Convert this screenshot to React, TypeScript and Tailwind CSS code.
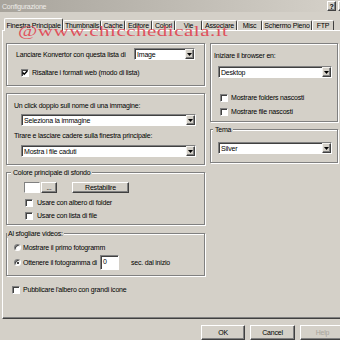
import React from "react";

function Check({ checked }: { checked?: boolean }) {
  return (
    <span className="w-[8px] h-[8px] shrink-0 bg-white border border-t-[#808080] border-l-[#808080] border-r-white border-b-white shadow-[inset_1px_1px_#404040] flex items-center justify-center">
      {checked && (
        <svg width="6" height="6" viewBox="0 0 6 6">
          <path d="M0.6 2.6 L2.2 4.3 L5.3 1" fill="none" stroke="#000" strokeWidth="1.4" />
        </svg>
      )}
    </span>
  );
}

function Radio({ checked }: { checked?: boolean }) {
  return (
    <span className="w-[7px] h-[7px] shrink-0 rounded-full bg-white border border-t-[#808080] border-l-[#808080] border-r-white border-b-white shadow-[inset_1px_1px_#404040] flex items-center justify-center">
      {checked && <span className="w-[2px] h-[2px] rounded-full bg-black" />}
    </span>
  );
}

function Select({ value, className }: { value: string; className: string }) {
  return (
    <div className={`h-[12px] bg-white flex items-center border border-t-[#808080] border-l-[#808080] border-r-white border-b-white shadow-[inset_1px_1px_#404040] ${className}`}>
      <span className="pl-[2px] flex-1 whitespace-nowrap">{value}</span>
      <span className="w-[9px] h-[10px] bg-[#d4d0c8] border border-t-[#f4f2ee] border-l-[#f4f2ee] border-r-[#404040] border-b-[#404040] shadow-[inset_-1px_-1px_#808080] flex items-center justify-center">
        <svg width="5" height="3" viewBox="0 0 5 3">
          <path d="M0 0H5L2.5 3Z" fill="#000" />
        </svg>
      </span>
    </div>
  );
}

const raised =
  "bg-[#d4d0c8] border border-t-white border-l-white border-r-[#404040] border-b-[#404040] shadow-[inset_-1px_-1px_#808080]";
const group = "border border-[#808080] shadow-[inset_1px_1px_#ffffff,1px_1px_#ffffff]";

const tabs: { label: string; w: string }[] = [
  { label: "Thumbnails", w: "w-[38px]" },
  { label: "Cache", w: "w-[24px]" },
  { label: "Editore", w: "w-[27px]" },
  { label: "Colori", w: "w-[23px]" },
  { label: "Vie", w: "w-[27px]" },
  { label: "Associare", w: "w-[35px]" },
  { label: "Misc", w: "w-[25px]" },
  { label: "Schermo Pieno", w: "w-[50px]" },
  { label: "FTP", w: "w-[22px]" },
];

export default function App() {
  return (
    <div className="w-[340px] h-[340px] overflow-hidden bg-[#d4d0c8] relative text-[7px] leading-[9px] tracking-[-0.2px] whitespace-nowrap text-black font-['Liberation_Sans',Arial,sans-serif]">
      <div className="w-[350px] flex flex-col">
        {/* title bar */}
        <div className="h-[12px] bg-linear-to-r from-[#a8a49c] to-[#d6d2ca] flex items-center justify-between pl-[2px] pr-[3px]">
          <span className="text-[#efede9]">Configurazione</span>
          <div className="flex gap-[2px]">
            <span className={`w-[9px] h-[10px] flex items-center justify-center font-bold ${raised}`}>?</span>
            <span className={`w-[9px] h-[10px] flex items-center justify-center ${raised}`}>
              <svg width="5" height="5" viewBox="0 0 5 5">
                <path d="M0 0L5 5M5 0L0 5" stroke="#000" strokeWidth="1.2" />
              </svg>
            </span>
          </div>
        </div>

        {/* tabs */}
        <div className="h-[18px] flex items-end pl-[4px] relative z-10">
          <div className="w-[59px] h-[13px] -mb-[1px] bg-[#d4d0c8] border-t border-l border-white border-r border-r-[#404040] rounded-t-[2px] flex items-start justify-center pt-[2px]">
            Finestra Principale
          </div>
          {tabs.map((t) => (
            <div
              key={t.label}
              className={`${t.w} h-[10px] bg-[#d4d0c8] border-t border-l border-white border-r border-r-[#404040] rounded-t-[2px] flex items-center justify-center`}
            >
              {t.label}
            </div>
          ))}
        </div>

        {/* panel */}
        <div className="ml-[2px] w-[344px] h-[289px] border border-t-white border-l-white border-r-[#404040] border-b-[#404040] shadow-[inset_-1px_-1px_#808080] flex gap-[5px] pl-[3px] pt-[12px]">
          {/* left column */}
          <div className="w-[199px] flex flex-col">
            <div className={`h-[43px] ${group} pt-[4px] pl-[9px] pr-[9px] flex flex-col`}>
              <div className="flex items-center h-[12px]">
                <span>Lanciare Konvertor con questa lista di</span>
                <Select value="Image" className="ml-auto w-[61px]" />
              </div>
              <div className="flex items-center mt-[8px] ml-[5px] gap-[3px]">
                <Check checked />
                <span>Risaltare i formati web (modo di lista)</span>
              </div>
            </div>

            <div className={`mt-[7px] h-[72px] ${group} pt-[7px] pl-[7px] flex flex-col`}>
              <span>Un click doppio sull nome di una immagine:</span>
              <Select value="Seleziona la immagine" className="mt-[4px] ml-[7px] w-[175px]" />
              <span className="mt-[5px]">Tirare e lasciare cadere sulla finestra principale:</span>
              <Select value="Mostra i file caduti" className="mt-[5px] ml-[7px] w-[175px]" />
            </div>

            <fieldset className={`mt-[3px] h-[57px] ${group}`}>
              <legend className="ml-[4px] px-[2px] bg-[#d4d0c8]">Colore principale di sfondo</legend>
              <div className="pl-[17px] flex flex-col">
                <div className="flex items-center h-[11px] mt-[5px]">
                  <span className="w-[16px] h-[11px] bg-white border border-t-[#808080] border-l-[#808080] border-r-white border-b-white" />
                  <span className={`ml-[1px] w-[16px] h-[11px] flex items-center justify-center ${raised}`}>...</span>
                  <span className={`ml-[15px] w-[57px] h-[11px] flex items-center justify-center ${raised}`}>Restabilire</span>
                </div>
                <div className="flex items-center mt-[5px] ml-[1px] gap-[4px]">
                  <Check />
                  <span>Usare con albero di folder</span>
                </div>
                <div className="flex items-center mt-[4px] ml-[1px] gap-[4px]">
                  <Check />
                  <span>Usare con lista di file</span>
                </div>
              </div>
            </fieldset>

            <fieldset className={`mt-[4px] h-[47px] ${group}`}>
              <legend className="px-[1px] bg-[#d4d0c8]">Al sfogliare videos:</legend>
              <div className="pl-[7px] flex flex-col">
                <div className="flex items-center h-[9px] mt-[5px] gap-[2px]">
                  <Radio />
                  <span>Mostrare il primo fotogramm</span>
                </div>
                <div className="flex items-center h-[15px] mt-[3px] gap-[2px]">
                  <Radio checked />
                  <span>Ottenere il fotogramma di</span>
                  <span className="ml-[1px] w-[19px] h-[15px] bg-white border border-t-[#808080] border-l-[#808080] border-r-white border-b-white shadow-[inset_1px_1px_#404040] pl-[2px] pt-[1px]">0</span>
                  <span className="ml-[10px]">sec. dal inizio</span>
                </div>
              </div>
            </fieldset>

            <div className="flex items-center mt-[9px] ml-[6px] gap-[3px]">
              <Check />
              <span>Pubblicare l'albero con grandi icone</span>
            </div>
          </div>

          {/* right column */}
          <div className="w-[128px] flex flex-col">
            <div className={`h-[79px] ${group} pt-[7px] pl-[3px] flex flex-col`}>
              <span>Iniziare il browser en:</span>
              <Select value="Desktop" className="mt-[6px] ml-[4px] w-[114px]" />
              <div className="flex items-center mt-[15px] ml-[6px] gap-[3px]">
                <Check />
                <span>Mostrare folders nascosti</span>
              </div>
              <div className="flex items-center mt-[5px] ml-[6px] gap-[3px]">
                <Check />
                <span>Mostrare file nascosti</span>
              </div>
            </div>
            <fieldset className={`mt-[3px] h-[38px] ${group}`}>
              <legend className="ml-[2px] px-[2px] bg-[#d4d0c8]">Tema</legend>
              <Select value="Silver" className="mt-[8px] ml-[7px] w-[114px]" />
            </fieldset>
          </div>
        </div>

        {/* buttons */}
        <div className="flex justify-end gap-[5px] pr-[5px] mt-[6px]">
          <span className={`w-[44px] h-[15px] flex items-center justify-center ${raised}`}>OK</span>
          <span className={`w-[45px] h-[15px] flex items-center justify-center ${raised}`}>Cancel</span>
          <span className={`w-[45px] h-[15px] flex items-center justify-center text-[#a8a49c] ${raised}`}>Help</span>
        </div>
      </div>

      <div className="absolute left-[18px] top-[22px] z-20 pointer-events-none text-[21px] leading-[15px] tracking-[0.5px] text-[#e0505c] font-['Liberation_Serif',serif] origin-[0_15px] scale-y-[0.72]">
        @www.chicchedicala.it
      </div>
    </div>
  );
}
